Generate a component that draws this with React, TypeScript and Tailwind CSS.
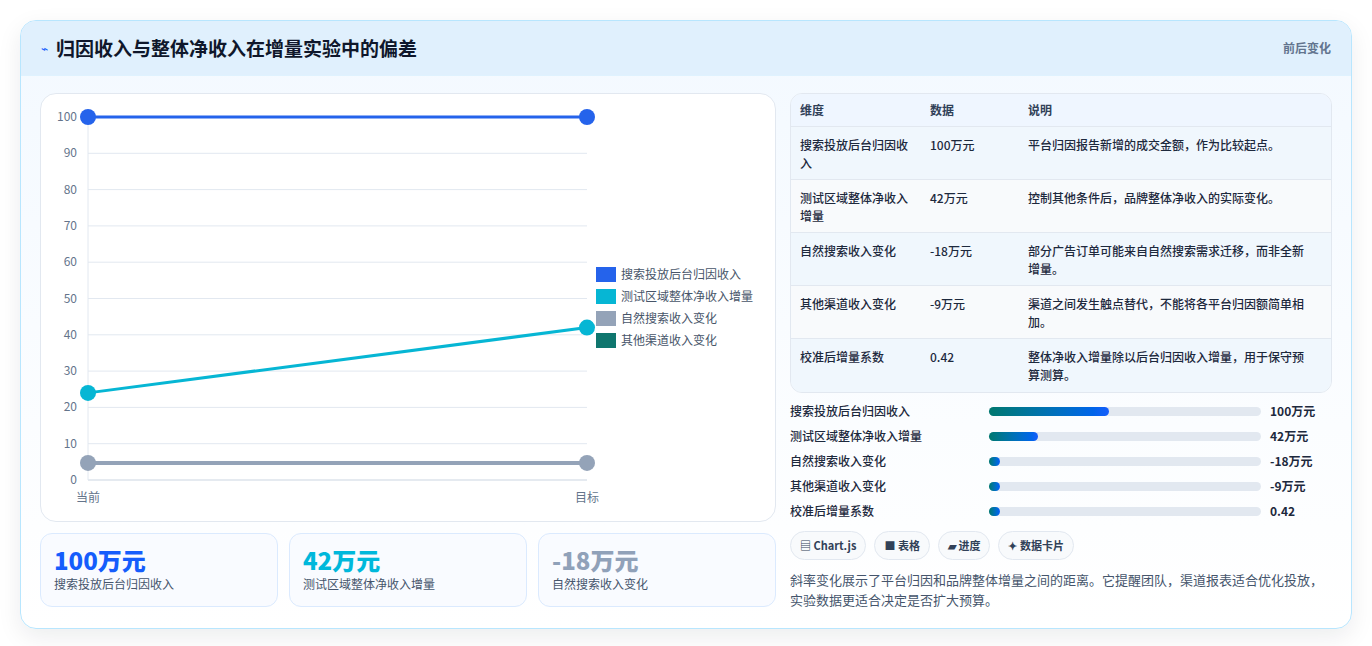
import React from 'react';

const font = { fontFamily: '"Noto Sans CJK SC", "Noto Sans", sans-serif' };

const rows = [
  ['搜索投放后台归因收入', '100万元', '平台归因报告新增的成交金额，作为比较起点。'],
  ['测试区域整体净收入增量', '42万元', '控制其他条件后，品牌整体净收入的实际变化。'],
  ['自然搜索收入变化', '-18万元', '部分广告订单可能来自自然搜索需求迁移，而非全新增量。'],
  ['其他渠道收入变化', '-9万元', '渠道之间发生触点替代，不能将各平台归因额简单相加。'],
  ['校准后增量系数', '0.42', '整体净收入增量除以后台归因收入增量，用于保守预算测算。'],
];

const bars = [
  ['搜索投放后台归因收入', 44, '100万元'],
  ['测试区域整体净收入增量', 18, '42万元'],
  ['自然搜索收入变化', 4, '-18万元'],
  ['其他渠道收入变化', 4, '-9万元'],
  ['校准后增量系数', 4, '0.42'],
] as const;

const legend = [
  ['#2563eb', '搜索投放后台归因收入'],
  ['#06b6d4', '测试区域整体净收入增量'],
  ['#94a3b8', '自然搜索收入变化'],
  ['#0f766e', '其他渠道收入变化'],
];

function Chart() {
  const x0 = 47, x1 = 546;
  const y = (v: number) => 23 + (100 - v) * 3.63;
  return (
    <svg width="735" height="428" className="block">
      {[0, 10, 20, 30, 40, 50, 60, 70, 80, 90, 100].map((v) => (
        <g key={v}>
          <line x1={x0} x2={x1} y1={y(v)} y2={y(v)} stroke={v === 0 ? '#cbd5e1' : '#e2e8f0'} />
          <text x={x0 - 11} y={y(v) + 4} fontSize="12" fill="#64748b" textAnchor="end">{v}</text>
        </g>
      ))}
      <line x1={x0} x2={x0} y1={y(100)} y2={y(0)} stroke="#e2e8f0" />
      <text x={x0} y={408} fontSize="12" fill="#64748b" textAnchor="middle">当前</text>
      <text x={x1} y={408} fontSize="12" fill="#64748b" textAnchor="middle">目标</text>
      <line x1={x0} x2={x1} y1={y(100)} y2={y(100)} stroke="#2563eb" strokeWidth="3" />
      <line x1={x0} x2={x1} y1={y(24)} y2={y(42)} stroke="#06b6d4" strokeWidth="3" />
      <line x1={x0} x2={x1} y1={y(4.7)} y2={y(4.7)} stroke="#94a3b8" strokeWidth="4" />
      {[[100, 100, '#2563eb'], [24, 42, '#06b6d4'], [4.7, 4.7, '#94a3b8']].map(([a, b, c], i) => (
        <g key={i}>
          <circle cx={x0} cy={y(a as number)} r="8" fill={c as string} />
          <circle cx={x1} cy={y(b as number)} r="8" fill={c as string} />
        </g>
      ))}
      {legend.map(([c, t], i) => (
        <g key={t}>
          <rect x={555} y={173 + i * 22} width="20" height="15" fill={c} />
          <text x={580} y={185 + i * 22} fontSize="12" fill="#475569">{t}</text>
        </g>
      ))}
    </svg>
  );
}

export default function App() {
  return (
    <div style={font} className="min-h-[646px] bg-white px-5 py-5">
      <div className="overflow-hidden rounded-2xl border border-sky-200 bg-gradient-to-b from-[#f3f9ff] to-white shadow-[0_8px_24px_rgba(15,23,42,0.08)]">
        <div className="flex h-[55px] items-center justify-between border-b border-sky-100 bg-[#e0f0fd] px-5">
          <div className="flex items-center gap-2">
            <span className="text-xs text-blue-600">⌁</span>
            <h1 className="text-[19px] font-bold text-slate-900">归因收入与整体净收入在增量实验中的偏差</h1>
          </div>
          <span className="text-xs font-semibold text-slate-500">前后变化</span>
        </div>
        <div className="flex gap-[14px] px-[19px] pt-[17px] pb-[18px]">
          <div className="flex w-[736px] flex-col gap-[11px]">
            <div className="h-[429px] overflow-hidden rounded-2xl border border-slate-200 bg-white">
              <Chart />
            </div>
            <div className="grid grid-cols-3 gap-[11px]">
              {[
                ['100万元', 'text-blue-600', '搜索投放后台归因收入'],
                ['42万元', 'text-cyan-500', '测试区域整体净收入增量'],
                ['-18万元', 'text-slate-400', '自然搜索收入变化'],
              ].map(([v, c, l]) => (
                <div key={l} className="h-[74px] rounded-xl border border-blue-100 bg-[#f9fbff] px-[13px] pt-[10px]">
                  <div className={`text-[24px] font-extrabold leading-8 ${c}`}>{v}</div>
                  <div className="text-xs text-slate-600">{l}</div>
                </div>
              ))}
            </div>
          </div>
          <div className="flex flex-1 flex-col">
            <div className="overflow-hidden rounded-xl border border-slate-200 bg-[#f8fafc] text-xs text-slate-800">
              <div className="grid h-[33px] grid-cols-[130px_98px_1fr] items-center border-b border-slate-200 bg-[#eff6ff] px-[9px] font-semibold text-slate-700">
                <span>维度</span><span>数据</span><span>说明</span>
              </div>
              {rows.map((r, i) => (
                <div key={i} className={`grid h-[53px] grid-cols-[130px_98px_1fr] items-start px-[9px] pt-[9px] leading-[18px] font-medium ${i < 4 ? 'border-b border-slate-200' : ''} ${i % 2 ? 'bg-[#f8fafc]' : 'bg-[#f0f7fd]'}`}>
                  <span className="pr-4">{r[0]}</span><span>{r[1]}</span><span className="pr-3">{r[2]}</span>
                </div>
              ))}
            </div>
            <div className="mt-[9px] flex flex-col gap-[7px]">
              {bars.map(([l, w, v]) => (
                <div key={l} className="flex h-[18px] items-center text-xs font-medium text-slate-800">
                  <span className="w-[199px]">{l}</span>
                  <div className="h-[9px] w-[272px] rounded-full bg-slate-200">
                    <div className="h-full rounded-full bg-gradient-to-r from-teal-700 to-blue-600" style={{ width: `${w}%` }} />
                  </div>
                  <span className="ml-[9px] font-bold">{v}</span>
                </div>
              ))}
            </div>
            <div className="mt-[11px] flex gap-2">
              {['▤ Chart.js', '■ 表格', '▰ 进度', '✦ 数据卡片'].map((t) => (
                <span key={t} className="rounded-full border border-slate-200 bg-slate-50 px-[9px] py-[5px] text-[11px] font-semibold text-slate-700">{t}</span>
              ))}
            </div>
            <p className="mt-[10px] text-[13px] leading-[20px] text-slate-600">
              斜率变化展示了平台归因和品牌整体增量之间的距离。它提醒团队，渠道报表适合优化投放，实验数据更适合决定是否扩大预算。
            </p>
          </div>
        </div>
      </div>
    </div>
  );
}
